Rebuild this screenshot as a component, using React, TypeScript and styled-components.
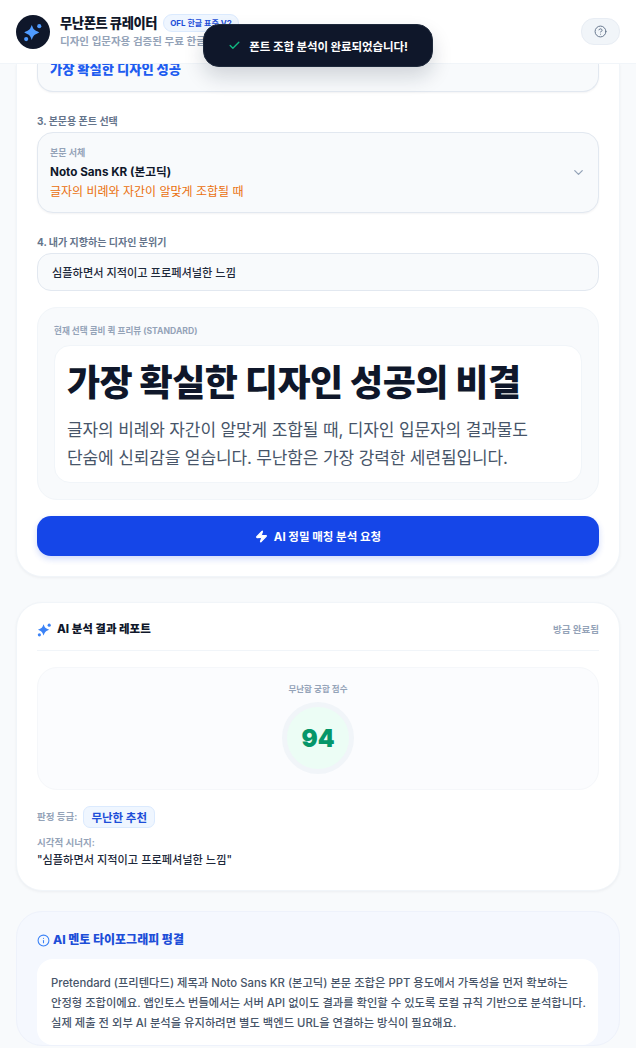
import React from "react";
import styled, { createGlobalStyle } from "styled-components";
import { Check, ChevronDown, CircleHelp, Info, Zap } from "lucide-react";

const GlobalStyle = createGlobalStyle`
  html, body {
    margin: 0;
    padding: 0;
    background: #f8fafc;
    font-family: Inter, "Noto Sans CJK KR", "Noto Sans", sans-serif;
    color: #0f172a;
  }
  * { box-sizing: border-box; }
`;

const Page = styled.div`
  position: relative;
  width: 636px;
  height: 1048px;
  overflow: hidden;
  display: flex;
  flex-direction: column;
`;

const Header = styled.header`
  flex: none;
  height: 64px;
  background: #fff;
  border-bottom: 1px solid #f1f5f9;
  padding: 0 16px;
  display: flex;
  align-items: center;
  justify-content: space-between;
  position: relative;
  z-index: 2;
`;

const Brand = styled.div`
  display: flex;
  align-items: center;
  gap: 10px;
`;

const Logo = styled.div`
  width: 34px;
  height: 34px;
  border-radius: 50%;
  background: #0f172a;
  display: flex;
  align-items: center;
  justify-content: center;
`;

const BrandText = styled.div`
  display: flex;
  flex-direction: column;
  gap: 3px;
`;

const TitleRow = styled.div`
  display: flex;
  align-items: center;
  gap: 6px;
`;

const AppTitle = styled.h1`
  margin: 0;
  font-size: 13.3px;
  line-height: 18px;
  font-weight: 800;
  letter-spacing: -0.4px;
`;

const Badge = styled.span`
  font-size: 8px;
  line-height: 16px;
  font-weight: 700;
  color: #1d4ed8;
  background: #eff6ff;
  border: 1px solid #dbeafe;
  border-radius: 999px;
  padding: 0 6px;
`;

const Subtitle = styled.p`
  margin: 0;
  font-size: 10.5px;
  line-height: 14px;
  font-weight: 600;
  color: #94a3b8;
  white-space: nowrap;
`;

const HelpButton = styled.button`
  width: 39px;
  height: 27px;
  border: 1px solid #e8edf4;
  border-radius: 13px;
  background: #f1f5f9;
  color: #64748b;
  display: flex;
  align-items: center;
  justify-content: center;
  padding: 0;
`;

const Toast = styled.div`
  position: absolute;
  z-index: 3;
  top: 24px;
  left: 203px;
  width: 230px;
  height: 43px;
  border-radius: 16px;
  background: #0f172a;
  border: 1px solid #1e293b;
  box-shadow: 0 10px 20px rgba(15, 23, 42, 0.16);
  color: #fff;
  font-size: 11.5px;
  font-weight: 700;
  letter-spacing: -0.1px;
  display: flex;
  align-items: center;
  justify-content: center;
  gap: 8px;
`;

const Content = styled.main`
  flex: 1;
  min-height: 0;
  padding: 0 16px;
  display: flex;
  flex-direction: column;
  gap: 25px;
`;

const Card = styled.section<{ $clipped?: boolean }>`
  flex: none;
  background: #fff;
  border: 1px solid #f1f5f9;
  border-radius: ${(p) => (p.$clipped ? "0 0 26px 26px" : "26px")};
  border-top-width: ${(p) => (p.$clipped ? 0 : "1px")};
  padding: ${(p) => (p.$clipped ? "0 20px 20px" : "18px 20px 22px")};
  box-shadow: 0 1px 3px rgba(15, 23, 42, 0.05);
`;

const MentorCard = styled.section`
  flex: none;
  background: #f5f8fe;
  border: 1px solid #eef2fb;
  border-radius: 26px;
  padding: 20px 21px 0 20px;
  margin-top: -5px;
`;

const ClippedField = styled.div`
  height: 28px;
  background: #f8fafc;
  border: 1px solid #e2e8f0;
  border-top: 0;
  border-radius: 0 0 16px 16px;
  padding: 0 12px;
  font-size: 13.3px;
  font-weight: 800;
  line-height: 10px;
  color: #1d5cf0;
  box-shadow: 0 1px 2px rgba(15, 23, 42, 0.05);
`;

const FieldLabel = styled.label`
  display: block;
  margin: 22px 0 4px;
  font-size: 10px;
  line-height: 14px;
  font-weight: 700;
  color: #64748b;
`;

const SelectBox = styled.div`
  height: 81px;
  background: #f8fafc;
  border: 1px solid #e2e8f0;
  border-radius: 16px;
  padding: 12px 12px;
  display: flex;
  align-items: center;
  justify-content: space-between;
  color: #94a3b8;
  box-shadow: 0 1px 2px rgba(15, 23, 42, 0.05);
`;

const SelectText = styled.div`
  display: flex;
  flex-direction: column;
`;

const SelectCaption = styled.span`
  font-size: 9px;
  line-height: 14px;
  font-weight: 700;
  color: #94a3b8;
`;

const SelectValue = styled.span`
  margin-top: 4px;
  font-size: 11.7px;
  line-height: 16px;
  font-weight: 700;
  color: #0f172a;
`;

const SelectSample = styled.span`
  margin-top: 4px;
  font-size: 12px;
  line-height: 16px;
  color: #ea700c;
`;

const TextInput = styled.div`
  height: 38px;
  background: #f8fafc;
  border: 1px solid #e2e8f0;
  border-radius: 14px;
  padding: 0 14px;
  display: flex;
  align-items: center;
  font-size: 11.2px;
  font-weight: 500;
  color: #1e293b;
`;

const PreviewPanel = styled.div`
  margin-top: 16px;
  background: #f8fafc;
  border: 1px solid #f1f5f9;
  border-radius: 20px;
  padding: 16px;
`;

const PreviewLabel = styled.div`
  font-size: 8.6px;
  line-height: 14px;
  font-weight: 700;
  color: #94a3b8;
  margin-bottom: 7px;
`;

const PreviewCard = styled.div`
  background: #fff;
  border: 1px solid #f1f5f9;
  border-radius: 16px;
  padding: 15px 12px 10px;
`;

const PreviewHeading = styled.h2`
  margin: 0 0 11px;
  font-size: 36px;
  line-height: 44px;
  font-weight: 800;
  letter-spacing: -0.5px;
  white-space: nowrap;
`;

const PreviewBody = styled.p`
  margin: 0;
  font-size: 17px;
  line-height: 28px;
  letter-spacing: -0.13px;
  color: #475569;
`;

const PrimaryButton = styled.button`
  margin-top: 16px;
  width: 100%;
  height: 40px;
  border: 0;
  border-radius: 14px;
  background: #1546e8;
  color: #fff;
  font: inherit;
  font-size: 11.5px;
  font-weight: 700;
  display: flex;
  align-items: center;
  justify-content: center;
  gap: 6px;
  box-shadow: 0 3px 6px rgba(21, 70, 232, 0.2);
`;

const ReportHeader = styled.div`
  display: flex;
  align-items: center;
  justify-content: space-between;
  padding: 0 0 13px;
  border-bottom: 1px solid #f1f5f9;
`;

const ReportTitle = styled.h3<{ $accent?: boolean }>`
  margin: 0;
  display: flex;
  align-items: center;
  gap: ${(p) => (p.$accent ? "3px" : "5px")};
  font-size: ${(p) => (p.$accent ? "12px" : "11.5px")};
  line-height: 16px;
  font-weight: 800;
  color: ${(p) => (p.$accent ? "#1d4ed8" : "#0f172a")};
`;

const ReportTime = styled.span`
  font-size: 9.5px;
  font-weight: 600;
  color: #94a3b8;
`;

const ScorePanel = styled.div`
  margin-top: 16px;
  height: 123px;
  background: #fbfcfe;
  border: 1px solid #f5f7fa;
  border-radius: 20px;
  padding-top: 15px;
  display: flex;
  flex-direction: column;
  align-items: center;
`;

const ScoreLabel = styled.div`
  font-size: 8.5px;
  line-height: 12px;
  font-weight: 600;
  color: #94a3b8;
`;

const ScoreRing = styled.div`
  margin-top: 7px;
  width: 72px;
  height: 72px;
  border-radius: 50%;
  border: 5px solid #f1f5f9;
  background: #ecfdf5;
  color: #059669;
  font-size: 24px;
  font-weight: 900;
  display: flex;
  align-items: center;
  justify-content: center;
`;

const GradeRow = styled.div`
  margin-top: 16px;
  display: flex;
  align-items: center;
  gap: 6px;
`;

const MetaLabel = styled.span`
  font-size: 9.5px;
  line-height: 14px;
  font-weight: 600;
  color: #94a3b8;
`;

const GradePill = styled.span`
  height: 22px;
  padding: 0 7px;
  border-radius: 7px;
  background: #eff6ff;
  border: 1px solid #dbeafe;
  color: #1d4ed8;
  font-size: 11.5px;
  font-weight: 700;
  display: flex;
  align-items: center;
`;

const SynergyBlock = styled.div`
  margin-top: 8px;
  display: flex;
  flex-direction: column;
  gap: 2px;
`;

const SynergyQuote = styled.div`
  font-size: 11.2px;
  line-height: 16px;
  font-weight: 500;
  color: #1e293b;
`;

const MentorBody = styled.p`
  margin: 11px 0 0;
  background: #fff;
  border-radius: 16px;
  padding: 14px 10px 12px 14px;
  font-size: 11.3px;
  line-height: 20px;
  font-weight: 500;
  color: #475569;
  word-break: keep-all;
`;

const Sparkle = ({ size, color }: { size: number; color: string }) => (
  <svg width={size} height={size} viewBox="0 0 24 24" fill={color}>
    <path d="M10.5 3.5c1 2.2 1.5 4.2 2.9 5.6 1.4 1.4 3.6 2 6.1 3.4-2.5 1.3-4.7 2-6.1 3.4-1.4 1.4-1.9 3.4-2.9 5.6-1-2.2-1.5-4.2-2.9-5.6C6.2 14.5 4 13.8 1.500 12.500c2.500-1.400 4.700-2 6.100-3.400 1.400-1.400 1.900-3.400 2.900-5.600z" />
    <circle cx="19.500" cy="5" r="2.500" />
    <circle cx="3.800" cy="20.500" r="2.500" />
  </svg>
);

export default function App() {
  return (
    <Page>
      <GlobalStyle />
      <Header>
        <Brand>
          <Logo>
            <Sparkle size={20} color="#4f9bff" />
          </Logo>
          <BrandText>
            <TitleRow>
              <AppTitle>무난폰트 큐레이터</AppTitle>
              <Badge>OFL 한글 표준 V2</Badge>
            </TitleRow>
            <Subtitle>디자인 입문자용 검증된 무료 한글 폰트 추천</Subtitle>
          </BrandText>
        </Brand>
        <HelpButton>
          <CircleHelp size={13} strokeWidth={1.8} />
        </HelpButton>
      </Header>
      <Toast>
        <Check size={13} color="#10b981" strokeWidth={2.5} />
        폰트 조합 분석이 완료되었습니다!
      </Toast>
      <Content>
        <Card $clipped>
          <ClippedField>가장 확실한 디자인 성공</ClippedField>
          <FieldLabel>3. 본문용 폰트 선택</FieldLabel>
          <SelectBox>
            <SelectText>
              <SelectCaption>본문 서체</SelectCaption>
              <SelectValue>Noto Sans KR (본고딕)</SelectValue>
              <SelectSample>글자의 비례와 자간이 알맞게 조합될 때</SelectSample>
            </SelectText>
            <ChevronDown size={15} />
          </SelectBox>
          <FieldLabel>4. 내가 지향하는 디자인 분위기</FieldLabel>
          <TextInput>심플하면서 지적이고 프로페셔널한 느낌</TextInput>
          <PreviewPanel>
            <PreviewLabel>현재 선택 콤비 퀵 프리뷰 (STANDARD)</PreviewLabel>
            <PreviewCard>
              <PreviewHeading>가장 확실한 디자인 성공의 비결</PreviewHeading>
              <PreviewBody>
                글자의 비례와 자간이 알맞게 조합될 때, 디자인 입문자의 결과물도
                <br />
                단숨에 신뢰감을 얻습니다. 무난함은 가장 강력한 세련됨입니다.
              </PreviewBody>
            </PreviewCard>
          </PreviewPanel>
          <PrimaryButton>
            <Zap size={13} fill="#fff" />
            AI 정밀 매칭 분석 요청
          </PrimaryButton>
        </Card>
        <Card>
          <ReportHeader>
            <ReportTitle>
              <Sparkle size={15} color="#3b82f6" />
              AI 분석 결과 레포트
            </ReportTitle>
            <ReportTime>방금 완료됨</ReportTime>
          </ReportHeader>
          <ScorePanel>
            <ScoreLabel>무난함 궁합 점수</ScoreLabel>
            <ScoreRing>94</ScoreRing>
          </ScorePanel>
          <GradeRow>
            <MetaLabel>판정 등급:</MetaLabel>
            <GradePill>무난한 추천</GradePill>
          </GradeRow>
          <SynergyBlock>
            <MetaLabel>시각적 시너지:</MetaLabel>
            <SynergyQuote>"심플하면서 지적이고 프로페셔널한 느낌"</SynergyQuote>
          </SynergyBlock>
        </Card>
        <MentorCard>
          <ReportTitle $accent>
            <Info size={13} color="#3b82f6" />
            AI 멘토 타이포그래피 평결
          </ReportTitle>
          <MentorBody>
            Pretendard (프리텐다드) 제목과 Noto Sans KR (본고딕) 본문 조합은 PPT 용도에서 가독성을 먼저 확보하는
            안정형 조합이에요. 앱인토스 번들에서는 서버 API 없이도 결과를 확인할 수 있도록 로컬 규칙 기반으로 분석합니다.
            실제 제출 전 외부 AI 분석을 유지하려면 별도 백엔드 URL을 연결하는 방식이 필요해요.
          </MentorBody>
        </MentorCard>
      </Content>
    </Page>
  );
}
